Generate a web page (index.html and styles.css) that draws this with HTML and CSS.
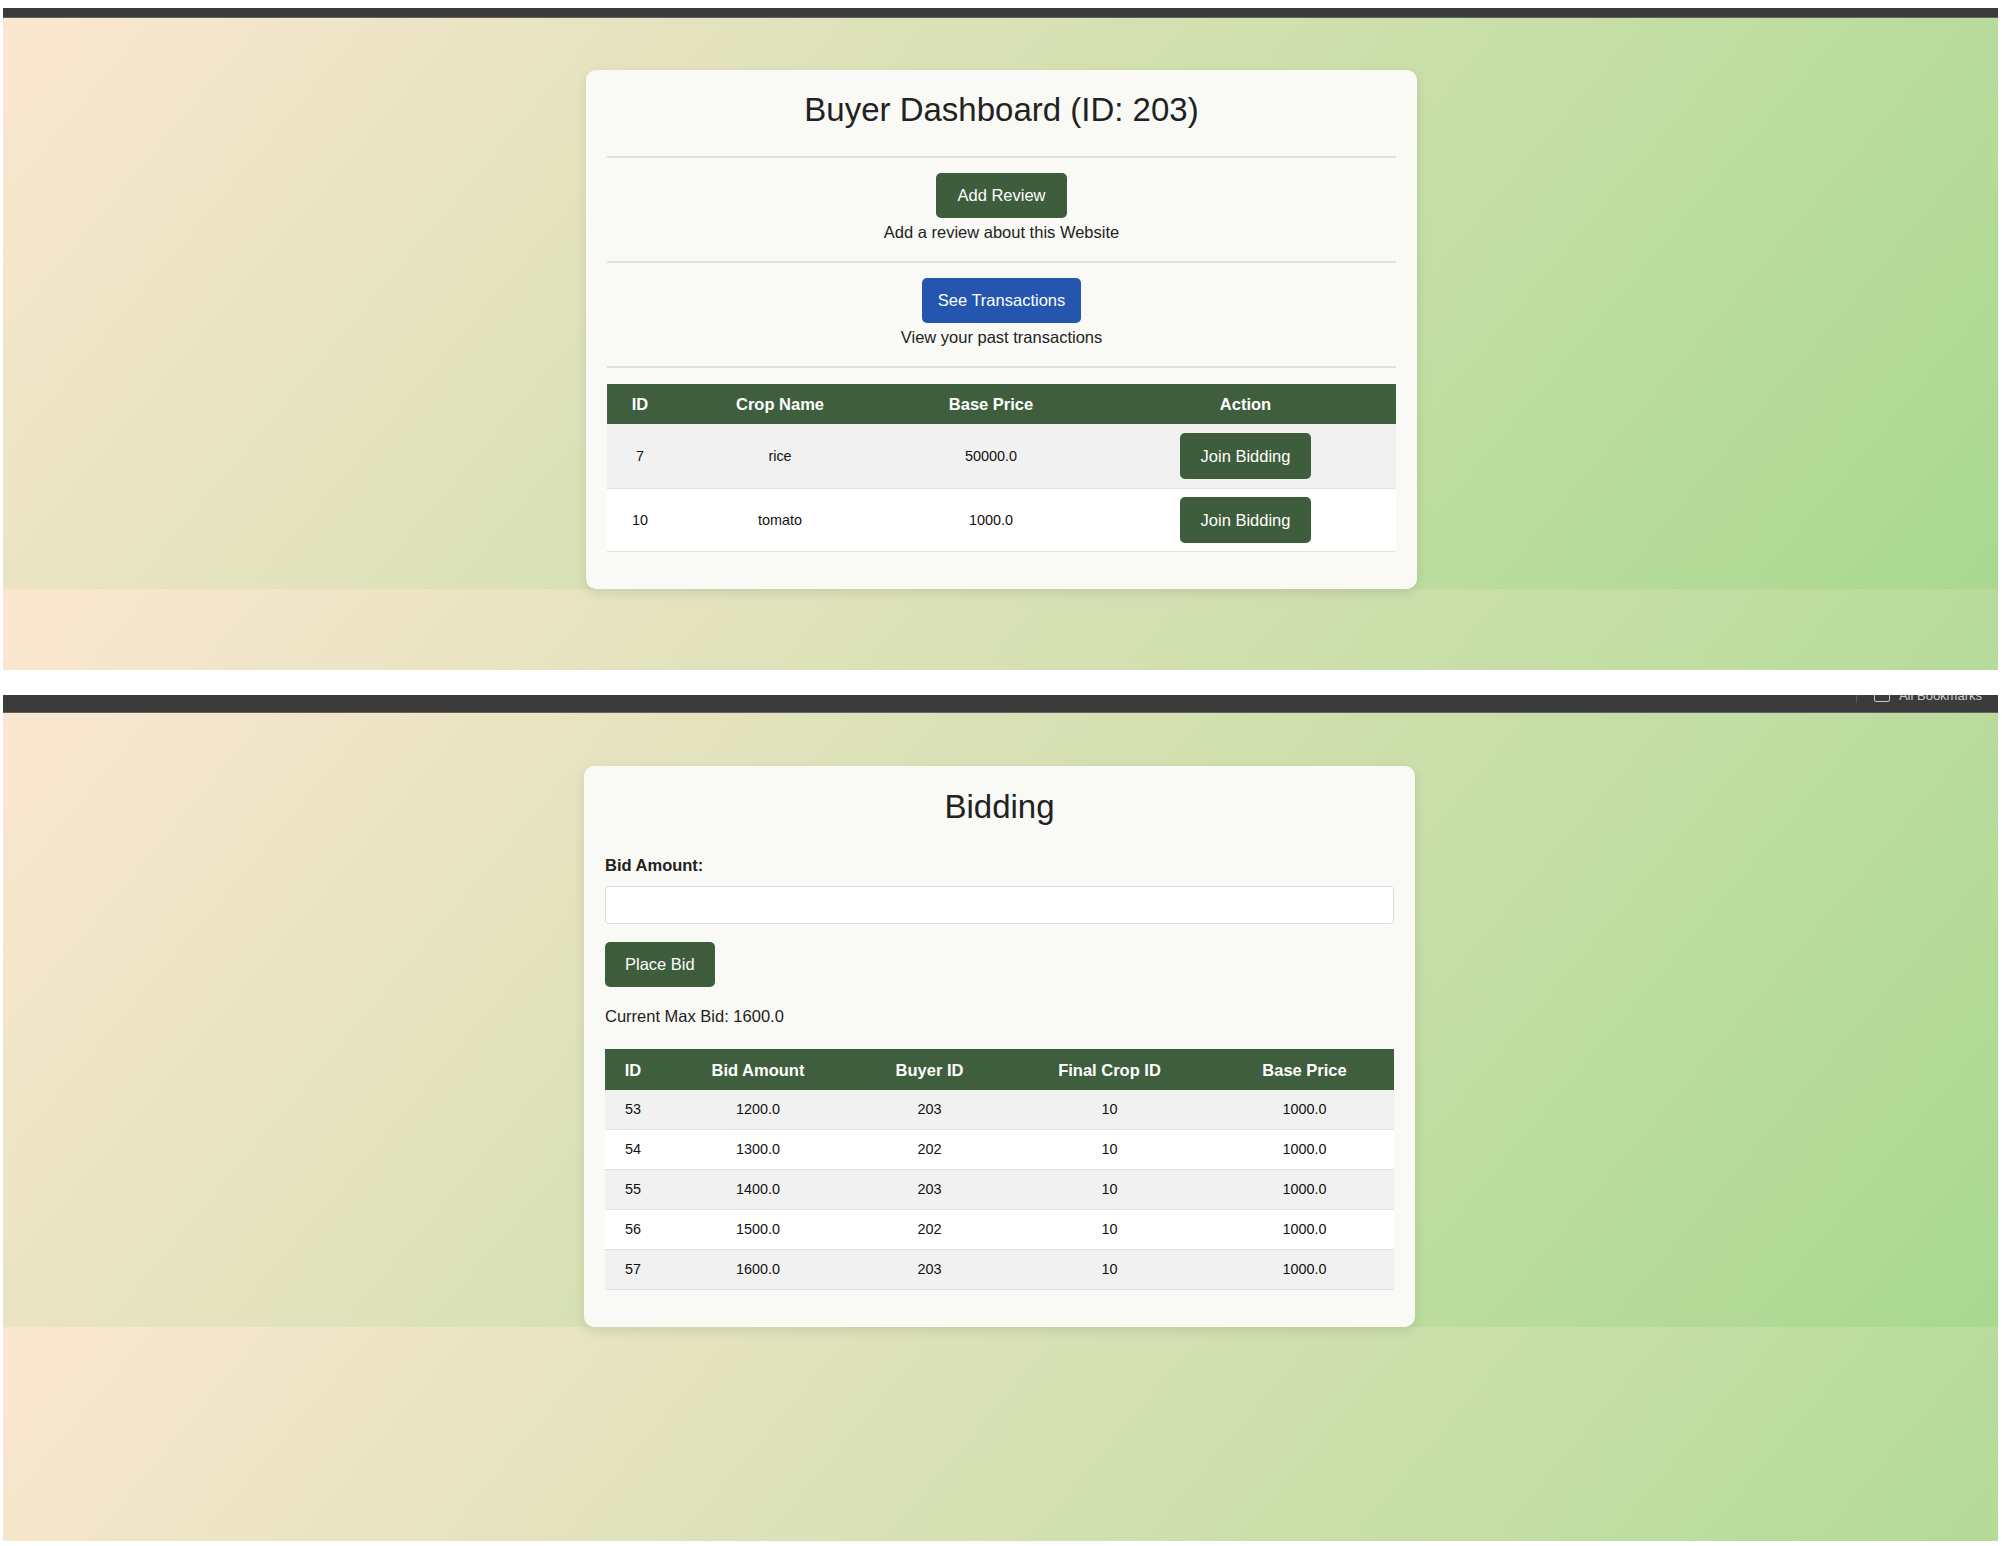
FILE: index.html
```html
<!DOCTYPE html>
<html lang="en">
<head>
<meta charset="utf-8">
<title>Buyer Dashboard</title>
<link rel="stylesheet" href="styles.css">
</head>
<body>
  <section class="screen screen-one">
    <div class="topbar topbar-thin"></div>
    <div class="viewport viewport-one">
      <div class="card card-dash">
        <h2 class="card-title">Buyer Dashboard (ID: 203)</h2>
        <div class="block">
          <button class="btn btn-green">Add Review</button>
          <p class="caption">Add a review about this Website</p>
        </div>
        <div class="block">
          <button class="btn btn-blue">See Transactions</button>
          <p class="caption">View your past transactions</p>
        </div>
        <div class="block block-table">
          <table class="grid grid-crops">
            <colgroup>
              <col class="c-id"><col class="c-name"><col class="c-price"><col class="c-action">
            </colgroup>
            <thead>
              <tr><th>ID</th><th>Crop Name</th><th>Base Price</th><th>Action</th></tr>
            </thead>
            <tbody>
              <tr><td>7</td><td>rice</td><td>50000.0</td><td><button class="btn btn-green">Join Bidding</button></td></tr>
              <tr><td>10</td><td>tomato</td><td>1000.0</td><td><button class="btn btn-green">Join Bidding</button></td></tr>
            </tbody>
          </table>
        </div>
      </div>
    </div>
  </section>

  <section class="screen screen-two">
    <div class="topbar topbar-thick">
      <span class="tb-divider"></span>
      <span class="tb-icon"></span>
      <span class="tb-label">All Bookmarks</span>
    </div>
    <div class="viewport viewport-two">
      <div class="card card-bid">
        <h2 class="card-title title-bid">Bidding</h2>
        <label class="field-label" for="bid">Bid Amount:</label>
        <input class="field-input" id="bid" type="text">
        <button class="btn btn-green btn-place">Place Bid</button>
        <p class="max-bid">Current Max Bid: 1600.0</p>
        <table class="grid grid-bids">
          <colgroup>
            <col class="b-id"><col class="b-amount"><col class="b-buyer"><col class="b-crop"><col class="b-price">
          </colgroup>
          <thead>
            <tr><th>ID</th><th>Bid Amount</th><th>Buyer ID</th><th>Final Crop ID</th><th>Base Price</th></tr>
          </thead>
          <tbody>
            <tr><td>53</td><td>1200.0</td><td>203</td><td>10</td><td>1000.0</td></tr>
            <tr><td>54</td><td>1300.0</td><td>202</td><td>10</td><td>1000.0</td></tr>
            <tr><td>55</td><td>1400.0</td><td>203</td><td>10</td><td>1000.0</td></tr>
            <tr><td>56</td><td>1500.0</td><td>202</td><td>10</td><td>1000.0</td></tr>
            <tr><td>57</td><td>1600.0</td><td>203</td><td>10</td><td>1000.0</td></tr>
          </tbody>
        </table>
      </div>
    </div>
  </section>
</body>
</html>
```

FILE: styles.css
```css
* { box-sizing: border-box; }

html, body { margin: 0; }

body {
  background: #ffffff;
  padding: 8px 4px 5px 3px;
  font-family: "Liberation Sans", Arial, Helvetica, sans-serif;
  color: #222;
}

.screen {
  display: flex;
  flex-direction: column;
}

.screen-two { margin-top: 25px; }

.topbar {
  background: #3b3b3b;
  border-bottom: 1px solid #626262;
}

.topbar-thin { height: 10px; }

.topbar-thick {
  height: 18px;
  display: flex;
  justify-content: flex-end;
  align-items: flex-start;
  overflow: hidden;
  padding-right: 16px;
}

.tb-divider {
  width: 1px;
  height: 8px;
  background: #5c5c5c;
  margin-right: 17px;
}

.tb-icon {
  width: 16px;
  height: 14px;
  margin-top: -7px;
  margin-right: 9px;
  border: 1.5px solid #c8c8c8;
  border-radius: 2px;
}

.tb-label {
  font-size: 13px;
  line-height: 15px;
  margin-top: -7px;
  color: #cfcfcf;
  white-space: nowrap;
}

.viewport {
  display: flex;
  justify-content: center;
  align-items: flex-start;
  background-image: linear-gradient(130deg, #fbe7d0 0%, #a8d98f 100%);
  background-repeat: repeat-y;
}

.viewport-one {
  height: 652px;
  padding-top: 52px;
  padding-left: 2px;
  background-size: 100% 571px;
}

.viewport-two {
  height: 828px;
  padding-top: 53px;
  padding-right: 2px;
  background-size: 100% 614px;
}

.card {
  width: 831px;
  padding: 20px 21px 37px;
  background: #f9faf5;
  border-radius: 10px;
  box-shadow: 0 4px 12px rgba(0, 0, 0, 0.1);
}

.card-title {
  margin: 0;
  font-size: 33px;
  line-height: 40px;
  font-weight: 400;
  text-align: center;
  color: #222;
}

.block {
  margin-top: 26px;
  border-top: 2px solid #e0e0e0;
  padding: 15px 0 19px;
  text-align: center;
}

.block + .block { margin-top: 0; }

.block-table {
  padding: 16px 0 0;
}

.caption {
  margin: 5px 0 0;
  font-size: 16.5px;
  line-height: 19px;
  color: #222;
}

.btn {
  display: inline-block;
  border: none;
  border-radius: 5px;
  font-family: "Liberation Sans", Arial, Helvetica, sans-serif;
  font-size: 16.5px;
  line-height: 19px;
  padding: 13px 21px;
  color: #ffffff;
  cursor: pointer;
}

.btn-green { background: #3e5d3d; }

.btn-blue {
  background: #2456b0;
  padding-left: 16px;
  padding-right: 16px;
}

.grid {
  width: 100%;
  border-collapse: collapse;
  table-layout: fixed;
}

.grid th {
  background: #3f5e3e;
  color: #ffffff;
  font-size: 16.5px;
  font-weight: 700;
  line-height: 20px;
  padding: 10px 8px;
  text-align: center;
}

.grid td {
  font-size: 14.4px;
  line-height: 17px;
  text-align: center;
  color: #111;
  border-bottom: 1px solid #e2e2e2;
}

.grid tbody tr:nth-child(odd) td { background: #f1f1f1; }
.grid tbody tr:nth-child(even) td { background: #ffffff; }

.grid-crops td { padding: 9px 8px; }
.grid-crops tbody tr:last-child td { padding-top: 8px; padding-bottom: 8px; }
.grid-crops .btn { line-height: 20px; }

.c-id { width: 66px; }
.c-name { width: 214px; }
.c-price { width: 208px; }
.c-action { width: 301px; }

.card-bid { padding-bottom: 37px; }

.title-bid { line-height: 42px; }

.field-label {
  display: block;
  margin-top: 28px;
  font-size: 16.5px;
  line-height: 19px;
  font-weight: 700;
  color: #222;
}

.field-input {
  display: block;
  width: 100%;
  height: 38px;
  margin-top: 11px;
  border: 1px solid #dcdcdc;
  border-radius: 4px;
  background: #ffffff;
}

.btn-place {
  display: block;
  margin-top: 18px;
  padding-left: 20px;
  padding-right: 20px;
  line-height: 19px;
}

.max-bid {
  margin: 20px 0 0;
  font-size: 16.5px;
  line-height: 19px;
  color: #222;
}

.grid-bids { margin-top: 23px; }
.grid-bids th { padding-top: 10.5px; padding-bottom: 10.5px; }
.grid-bids td { padding: 11px 8px; }

.b-id { width: 56px; }
.b-amount { width: 194px; }
.b-buyer { width: 149px; }
.b-crop { width: 211px; }
.b-price { width: 179px; }
```
